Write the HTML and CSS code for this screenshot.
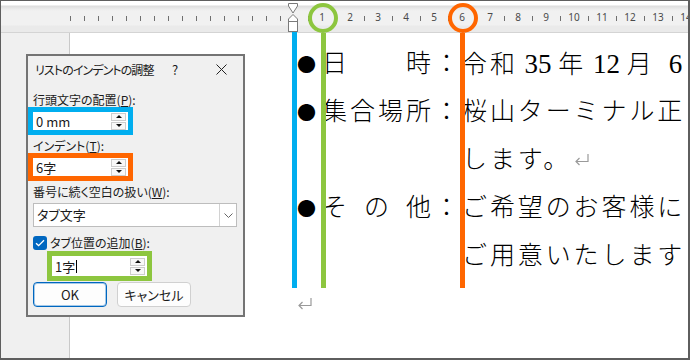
FILE: index.html
```html
<!DOCTYPE html>
<html lang="ja">
<head>
    <meta charset="UTF-8">
    <meta name="viewport" content="width=device-width, initial-scale=1.0">
    <title>リストのインデントの調整</title>
    <link rel="stylesheet" href="styles.css">
</head>
<body>

<div class="screen">

    <!-- Ruler -->
    <div class="ruler">
        <span class="tick"></span><span class="tick"></span><span class="tick"></span><span class="tick"></span>
        <span class="tick"></span><span class="tick"></span><span class="tick"></span><span class="tick"></span>
        <span class="tick"></span><span class="tick"></span><span class="tick"></span><span class="tick"></span>
        <span class="tick"></span><span class="tick"></span><span class="tick"></span><span class="tick"></span>
        <span class="mark">
            <svg width="10" height="30" viewBox="0 0 10 30">
                <path d="M0.5 1.5H9.5V4L5 11L0.5 4Z" fill="#fff" stroke="#7a7a7a"/>
                <path d="M5 12.5L9.5 17V19.5H0.5V17Z" fill="#fff" stroke="#7a7a7a"/>
                <rect x="0.5" y="19.5" width="9" height="10" fill="#fff" stroke="#7a7a7a"/>
            </svg>
        </span>
        <span class="tick"></span><span class="num">1</span>
        <span class="tick"></span><span class="num">2</span>
        <span class="tick"></span><span class="num">3</span>
        <span class="tick"></span><span class="num">4</span>
        <span class="tick"></span><span class="num">5</span>
        <span class="tick"></span><span class="num">6</span>
        <span class="tick"></span><span class="num">7</span>
        <span class="tick"></span><span class="num">8</span>
        <span class="tick"></span><span class="num">9</span>
        <span class="tick"></span><span class="num">10</span>
        <span class="tick"></span><span class="num">11</span>
        <span class="tick"></span><span class="num">12</span>
        <span class="tick"></span><span class="num">13</span>
        <span class="tick"></span><span class="num">14</span>
    </div>

    <!-- Document -->
    <div class="workspace">
        <div class="gutter"></div>
        <div class="page">
            <div class="row">
                <span class="bullet">●</span>
                <span class="label"><span class="spread"><span>日</span><span>時</span></span><span class="colon">：</span></span>
                <span class="text">令和<span class="lat"> 35 </span>年<span class="lat"> 12 </span>月<span class="lat lat-gap">6</span></span>
            </div>
            <div class="row">
                <span class="bullet">●</span>
                <span class="label"><span class="spread"><span>集</span><span>合</span><span>場</span><span>所</span></span><span class="colon">：</span></span>
                <span class="text">桜山ターミナル正</span>
            </div>
            <div class="row">
                <span class="bullet"></span>
                <span class="label"></span>
                <span class="text">します。<svg class="para-mark" width="16" height="13" viewBox="0 0 16 13"><path d="M14 1V8.5H2M5.5 5L2 8.5L5.5 12" fill="none" stroke="#9a9a9a" stroke-width="1.2"/></svg></span>
            </div>
            <div class="row">
                <span class="bullet">●</span>
                <span class="label"><span class="spread"><span>そ</span><span>の</span><span>他</span></span><span class="colon">：</span></span>
                <span class="text">ご希望のお客様に</span>
            </div>
            <div class="row">
                <span class="bullet"></span>
                <span class="label"></span>
                <span class="text">ご用意いたします</span>
            </div>
            <div class="row">
                <span class="return"><svg class="para-mark" width="16" height="13" viewBox="0 0 16 13"><path d="M14 1V8.5H2M5.5 5L2 8.5L5.5 12" fill="none" stroke="#9a9a9a" stroke-width="1.2"/></svg></span>
            </div>
        </div>
    </div>

    <!-- Annotation guides -->
    <div class="guide guide-blue"></div>
    <div class="guide guide-green"></div>
    <div class="guide guide-orange"></div>
    <div class="ring ring-green"></div>
    <div class="ring ring-orange"></div>

    <!-- Dialog -->
    <div class="dialog">
        <div class="dialog-head">
            <span class="dialog-title">リストのインデントの調整</span>
            <span class="dialog-help">?</span>
            <span class="dialog-close">
                <svg width="11" height="11" viewBox="0 0 11 11"><path d="M0.5 0.5L10.5 10.5M10.5 0.5L0.5 10.5" stroke="#222" stroke-width="1"/></svg>
            </span>
        </div>
        <div class="dialog-body">
            <div class="field-label">行頭文字の配置(<u>P</u>):</div>
            <div class="hl hl-blue">
                <div class="spin">
                    <span class="spin-value">0 mm</span>
                    <span class="spinner"><span class="up"></span><span class="down"></span></span>
                </div>
            </div>

            <div class="field-label">インデント(<u>T</u>):</div>
            <div class="hl hl-orange">
                <div class="spin">
                    <span class="spin-value">6字</span>
                    <span class="spinner"><span class="up"></span><span class="down"></span></span>
                </div>
            </div>

            <div class="field-label field-label-gap">番号に続く空白の扱い(<u>W</u>):</div>
            <div class="select">
                <span class="select-value">タブ文字</span>
                <span class="select-arrow">
                    <svg width="9" height="5" viewBox="0 0 9 5"><path d="M0.5 0.5L4.5 4.5L8.5 0.5" fill="none" stroke="#666" stroke-width="1"/></svg>
                </span>
            </div>

            <div class="check-row">
                <span class="checkbox">
                    <svg width="10" height="8" viewBox="0 0 10 8"><path d="M1 4.2L3.6 6.6L9 1.2" fill="none" stroke="#fff" stroke-width="1.3"/></svg>
                </span>
                <span>タブ位置の追加(<u>B</u>):</span>
            </div>
            <div class="hl hl-green">
                <div class="spin">
                    <span class="spin-value">1字<span class="caret"></span></span>
                    <span class="spinner"><span class="up"></span><span class="down"></span></span>
                </div>
            </div>

            <div class="buttons">
                <button class="btn btn-primary">OK</button>
                <button class="btn">キャンセル</button>
            </div>
        </div>
    </div>

</div>

</body>
</html>
```

FILE: styles.css
```css
* {
    box-sizing: border-box;
}
body {
    margin: 0;
}
.screen {
    position: relative;
    width: 690px;
    height: 360px;
    border-style: solid;
    border-color: #5e5e5e;
    border-width: 1px 2px 2px 1px;
    background: #fff;
    overflow: hidden;
}

/* Ruler */
.ruler {
    display: flex;
    height: 32px;
    padding-left: 62px;
    border-bottom: 1px solid #d4d4d4;
    background: linear-gradient(#fff 0, #fff 4px, #dcdcdc 5px, #eaeaea 8px, #f1f1f1 10px, #f1f1f1 24px, #eaeaea 25px);
    font-family: "Noto Sans", sans-serif;
    font-size: 10px;
    line-height: 1;
    color: #4a4a4a;
}
.ruler span {
    flex: none;
    width: 14px;
    display: flex;
    justify-content: center;
    align-items: center;
    white-space: nowrap;
}
.ruler .tick::before {
    content: "";
    width: 1px;
    height: 5px;
    margin-top: 4px;
    background: #6f6f6f;
}
.ruler .mark {
    align-items: flex-start;
}
.ruler .mark svg {
    margin-top: 1px;
    margin-right: 3px;
}

/* Document */
.workspace {
    display: flex;
    height: 325px;
}
.gutter {
    width: 69px;
    background: #f0f0f0;
    border-right: 1px solid #c9c9c9;
}
.page {
    flex: 1;
    overflow: hidden;
    padding: 7px 0 0 224px;
    font-family: "Liberation Serif", "Noto Sans CJK JP", serif;
    font-size: 25px;
    font-weight: 300;
    line-height: 48px;
    letter-spacing: 2.9px;
    white-space: nowrap;
    color: #000;
}
.row {
    display: flex;
    height: 48px;
}
.bullet {
    flex: none;
    width: 28px;
    padding-right: 3px;
    text-align: center;
    font-family: "Noto Sans CJK JP", sans-serif;
    font-size: 19px;
    letter-spacing: 0;
}
.label {
    flex: none;
    width: 140px;
    display: flex;
}
.spread {
    width: 112px;
    display: flex;
    justify-content: space-between;
}
.colon {
    width: 28px;
}
.text {
    flex: none;
}
.text .lat {
    font-size: 27px;
    font-weight: 400;
    letter-spacing: 0;
}
.text .lat-gap {
    margin-left: 14px;
}
.para-mark {
    margin-left: 3px;
    vertical-align: 2px;
}

/* Annotations */
.guide {
    position: absolute;
    width: 5px;
}
.guide-blue {
    left: 291px;
    top: 31px;
    height: 256px;
    background: #00aeef;
}
.guide-green {
    left: 320px;
    top: 32px;
    height: 255px;
    background: #8dc63f;
}
.guide-orange {
    left: 459px;
    top: 32px;
    height: 255px;
    background: #ff6600;
}
.ring {
    position: absolute;
    top: 2px;
    width: 30px;
    height: 30px;
    border: 4px solid;
    border-radius: 50%;
}
.ring-green {
    left: 307px;
    border-color: #8dc63f;
}
.ring-orange {
    left: 447px;
    border-color: #ff6600;
}

/* Dialog */
.dialog {
    position: absolute;
    left: 25px;
    top: 53px;
    width: 219px;
    height: 263px;
    border: 2px solid #747474;
    background: #f0f0f0;
    font-family: "Noto Sans CJK JP", sans-serif;
    font-size: 12px;
    font-feature-settings: "palt";
    color: #1b1b1b;
}
.dialog-head {
    display: flex;
    align-items: center;
    height: 27px;
    padding-left: 7px;
}
.dialog-title {
    flex: 1;
    letter-spacing: -0.9px;
}
.dialog-help {
    width: 12px;
    margin-right: 18px;
    text-align: center;
    font-size: 13px;
}
.dialog-close {
    width: 44px;
    display: flex;
    justify-content: center;
}
.dialog-body {
    padding: 6px 6px 0 5px;
}
.field-label {
    padding-top: 4px;
    line-height: 14px;
}
.field-label-gap {
    margin-bottom: 4px;
}
.hl {
    width: 105px;
    height: 28px;
    margin-left: -5px;
    border: 5px solid;
}
.hl-blue {
    border-color: #00aeef;
}
.hl-orange {
    border-color: #ff6600;
}
.hl-green {
    height: 30px;
    margin: 1px 0 0 14px;
    border-color: #8dc63f;
}
.spin {
    display: flex;
    align-items: center;
    height: 100%;
    padding: 0 2px 0 3px;
    background: #fff;
    font-size: 13px;
}
.spin-value {
    flex: 1;
    display: flex;
    align-items: center;
}
.caret {
    width: 1px;
    height: 13px;
    margin-left: 1px;
    background: #000;
}
.spinner {
    display: flex;
    flex-direction: column;
    gap: 1px;
}
.spinner span {
    width: 15px;
    height: 8px;
    border: 1px solid #cdcdcd;
    background: #f8f8f8;
    display: flex;
    align-items: center;
    justify-content: center;
}
.spinner .up::before {
    content: "";
    border-left: 3px solid transparent;
    border-right: 3px solid transparent;
    border-bottom: 3px solid #111;
}
.spinner .down::before {
    content: "";
    border-left: 3px solid transparent;
    border-right: 3px solid transparent;
    border-top: 3px solid #111;
}
.select {
    display: flex;
    height: 24px;
    border: 1px solid #bdbdbd;
    background: #fff;
    font-size: 13px;
}
.select-value {
    flex: 1;
    padding-left: 3px;
    line-height: 22px;
}
.select-arrow {
    width: 17px;
    border-left: 1px solid #d2d2d2;
    display: flex;
    align-items: center;
    justify-content: center;
}
.check-row {
    display: flex;
    align-items: center;
    gap: 3px;
    height: 15px;
    margin-top: 8px;
}
.checkbox {
    width: 14px;
    height: 14px;
    border-radius: 3px;
    background: #0067c0;
    display: flex;
    align-items: center;
    justify-content: center;
}
.buttons {
    display: flex;
    gap: 10px;
    margin-top: 1px;
}
.btn {
    width: 74px;
    height: 25px;
    padding: 0;
    border: 1px solid #d0d0d0;
    border-radius: 4px;
    background: #fdfdfd;
    font: inherit;
    font-size: 13px;
    color: #1b1b1b;
}
.btn-primary {
    border-color: #0067c0;
    box-shadow: inset 0 0 0 1px rgba(0, 103, 192, 0.35);
}
```
